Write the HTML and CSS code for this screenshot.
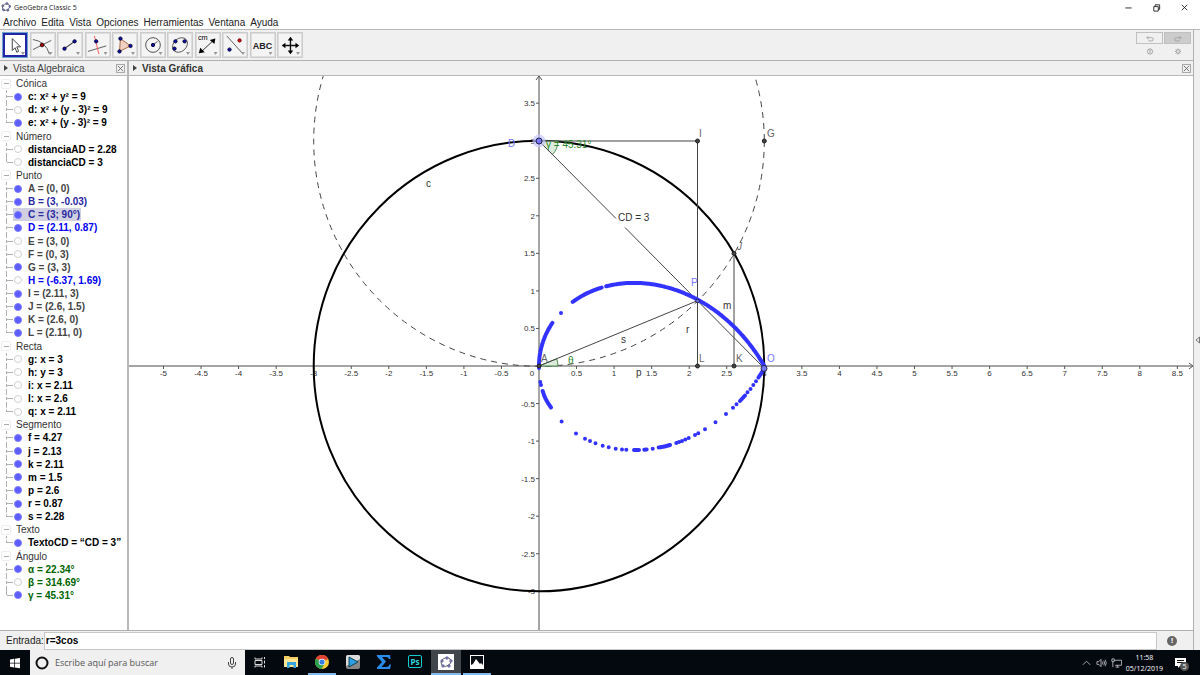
FILE: index.html
```html
<!DOCTYPE html>
<html lang="es">
<head>
  <meta charset="UTF-8" />
  <meta name="viewport" content="width=device-width, initial-scale=1.0" />
  <title>GeoGebra Classic 5</title>
  <link rel="stylesheet" href="styles.css">
</head>
<body>
  <header class="titlebar">
    <svg class="logo" viewBox="0 0 16 16"><ellipse cx="8" cy="8" rx="6" ry="5" transform="rotate(-25 8 8)" fill="none" stroke="#666" stroke-width="1.4"/><g fill="#8484d8" stroke="#446"><circle cx="3" cy="6" r="1.6"/><circle cx="9.500" cy="2.500" r="1.6"/><circle cx="14" cy="7" r="1.6"/><circle cx="11" cy="13" r="1.6"/><circle cx="4" cy="12.500" r="1.6"/></g></svg>
    <span>GeoGebra Classic 5</span>
    <div class="window-buttons">
      <button aria-label="Minimizar"><svg viewBox="0 0 10 10"><path d="M1.500 5.500h7"/></svg></button>
      <button aria-label="Restaurar"><svg viewBox="0 0 10 10"><path d="M2 4h5v5H2zM3.500 4V2h5v5H7"/></svg></button>
      <button aria-label="Cerrar"><svg viewBox="0 0 10 10"><path d="M2 2l6 6M8 2l-6 6"/></svg></button>
    </div>
  </header>

  <nav class="menu">
    <button>Archivo</button>
    <button>Edita</button>
    <button>Vista</button>
    <button>Opciones</button>
    <button>Herramientas</button>
    <button>Ventana</button>
    <button>Ayuda</button>
  </nav>

  <div class="window">
    <main class="app">
      <div class="toolbar">
        <div class="tools">
          <button class="active" aria-label="Elige y Mueve"><svg viewBox="0 0 24 24"><path d="M9 5v13l3-3 2 5 2-1-2-5h4z" fill="#fff" stroke="#333"/></svg></button>
          <button aria-label="Intersección"><svg viewBox="0 0 24 24"><path d="M1 6q14 2 18 16M1 17L21 7" fill="none" stroke="#555"/><circle cx="11" cy="12" r="2" fill="#a00" stroke="#300"/></svg></button>
          <button aria-label="Segmento"><svg viewBox="0 0 24 24"><path d="M6 16L17 8" stroke="#333" stroke-width="1.2"/><circle cx="6" cy="16" r="1.800" class="pt"/><circle cx="17" cy="8" r="1.800" class="pt"/></svg></button>
          <button aria-label="Perpendicular"><svg viewBox="0 0 24 24"><path d="M1 19L21 13" stroke="#555"/><path d="M8 2l5 20" stroke="#f55"/><circle cx="10" cy="8" r="1.800" class="pt"/></svg></button>
          <button aria-label="Polígono"><svg viewBox="0 0 24 24"><path d="M7 5L18 13 6 19z" fill="#f0d0c0" stroke="#a0603c"/><circle cx="7" cy="5" r="1.800" class="pt"/><circle cx="18" cy="13" r="1.800" class="pt"/><circle cx="6" cy="19" r="1.800" class="pt"/></svg></button>
          <button aria-label="Circunferencia"><svg viewBox="0 0 24 24"><circle cx="12" cy="12" r="8" fill="none" stroke="#444"/><path d="M12 12l5-4" stroke="#444"/><circle cx="12" cy="12" r="1.800" class="pt"/></svg></button>
          <button aria-label="Cónica"><svg viewBox="0 0 24 24"><ellipse cx="12" cy="12" rx="9" ry="7" transform="rotate(-42 12 12)" fill="none" stroke="#555"/><circle cx="7" cy="8" r="1.800" class="pt"/><circle cx="17" cy="8" r="1.800" class="pt"/><circle cx="6" cy="16" r="1.800" class="pt"/></svg></button>
          <button aria-label="Distancia"><svg viewBox="0 0 24 24"><text x="1" y="7" font-size="8">cm</text><path d="M4 20L19 6" stroke="#222"/><path d="M2 21l1.500-6 5 5zM20 5l-6 1.500 5 4.500z"/></svg></button>
          <button aria-label="Simetría"><svg viewBox="0 0 24 24"><path d="M3 2l17 19" stroke="#555"/><circle cx="17" cy="7" r="1.800" fill="#d11" stroke="#600"/><circle cx="6" cy="17" r="1.800" class="pt"/></svg></button>
          <button aria-label="Texto"><span>ABC</span></button>
          <button aria-label="Desplaza Vista Gráfica"><svg viewBox="0 0 24 24"><path d="M12.500 6v13M6 12.500h13" stroke="#111" stroke-width="1.500"/><path d="M12.500 3l3 4h-6zM12.500 22l3-4h-6zM3 12.500l4-3v6zM22 12.500l-4-3v6z"/></svg></button>
        </div>
        <div class="history">
          <button aria-label="Deshace"><svg viewBox="0 0 10 8"><path d="M3 1L1 3l2 2M1.500 3H7q2 0 2 2t-2 2H3"/></svg></button>
          <button class="redo" aria-label="Rehace"><svg viewBox="0 0 10 8"><path d="M7 1l2 2-2 2M8.500 3H3Q1 3 1 5t2 2h4"/></svg></button>
          <button class="plain" aria-label="Ayuda"><svg viewBox="0 0 8 8"><circle cx="4" cy="4" r="3"/><path d="M4 3v3M3 3q1-2 2 0"/></svg></button>
          <button class="plain" aria-label="Preferencias"><svg viewBox="0 0 8 8"><circle cx="4" cy="4" r="2"/><path d="M4 0.500v1.500M4 6v1.500M0.500 4h1.500M6 4h1.500M1.500 1.500l1 1M5.500 5.500l1 1M6.500 1.500l-1 1M2.500 5.500l-1 1"/></svg></button>
        </div>
      </div>

      <div class="views">
        <aside class="algebra">
          <div class="view-head">
            <svg class="arrow" viewBox="0 0 4 6"><path d="M0 0l4 3-4 3z"/></svg>
            <span>Vista Algebraica</span>
            <button class="close" aria-label="Cerrar vista"><svg viewBox="0 0 8 8"><path d="M1 1l6 6M7 1L1 7"/></svg></button>
          </div>
          <ul class="tree">
            <li class="group"><i></i>Cónica</li>
            <li><label><input type="checkbox" checked>c: x² + y² = 9</label></li>
            <li><label><input type="checkbox">d: x² + (y - 3)² = 9</label></li>
            <li class="last"><label><input type="checkbox" checked>e: x² + (y - 3)² = 9</label></li>
            <li class="group"><i></i>Número</li>
            <li><label><input type="checkbox">distanciaAD = 2.28</label></li>
            <li class="last"><label><input type="checkbox">distanciaCD = 3</label></li>
            <li class="group"><i></i>Punto</li>
            <li class="gray"><label><input type="checkbox" checked>A = (0, 0)</label></li>
            <li class="navy"><label><input type="checkbox" checked>B = (3, -0.03)</label></li>
            <li class="navy selected"><label><input type="checkbox" checked>C = (3; 90°)</label></li>
            <li class="blue"><label><input type="checkbox" checked>D = (2.11, 0.87)</label></li>
            <li class="gray"><label><input type="checkbox">E = (3, 0)</label></li>
            <li class="gray"><label><input type="checkbox">F = (0, 3)</label></li>
            <li class="gray"><label><input type="checkbox" checked>G = (3, 3)</label></li>
            <li class="blue"><label><input type="checkbox">H = (-6.37, 1.69)</label></li>
            <li class="gray"><label><input type="checkbox" checked>I = (2.11, 3)</label></li>
            <li class="gray"><label><input type="checkbox" checked>J = (2.6, 1.5)</label></li>
            <li class="gray"><label><input type="checkbox" checked>K = (2.6, 0)</label></li>
            <li class="gray last"><label><input type="checkbox" checked>L = (2.11, 0)</label></li>
            <li class="group"><i></i>Recta</li>
            <li><label><input type="checkbox">g: x = 3</label></li>
            <li><label><input type="checkbox">h: y = 3</label></li>
            <li><label><input type="checkbox">i: x = 2.11</label></li>
            <li><label><input type="checkbox">l: x = 2.6</label></li>
            <li class="last"><label><input type="checkbox">q: x = 2.11</label></li>
            <li class="group"><i></i>Segmento</li>
            <li><label><input type="checkbox" checked>f = 4.27</label></li>
            <li><label><input type="checkbox" checked>j = 2.13</label></li>
            <li><label><input type="checkbox" checked>k = 2.11</label></li>
            <li><label><input type="checkbox" checked>m = 1.5</label></li>
            <li><label><input type="checkbox" checked>p = 2.6</label></li>
            <li><label><input type="checkbox" checked>r = 0.87</label></li>
            <li class="last"><label><input type="checkbox" checked>s = 2.28</label></li>
            <li class="group"><i></i>Texto</li>
            <li class="last"><label><input type="checkbox" checked>TextoCD = “CD = 3”</label></li>
            <li class="group"><i></i>Ángulo</li>
            <li class="green"><label><input type="checkbox" checked>α = 22.34°</label></li>
            <li class="green"><label><input type="checkbox">β = 314.69°</label></li>
            <li class="green last"><label><input type="checkbox" checked>γ = 45.31°</label></li>
          </ul>
        </aside>

        <section class="graphics">
          <div class="view-head">
            <svg class="arrow" viewBox="0 0 4 6"><path d="M0 0l4 3-4 3z"/></svg>
            <strong>Vista Gráfica</strong>
            <button class="close" aria-label="Cerrar vista"><svg viewBox="0 0 8 8"><path d="M1 1l6 6M7 1L1 7"/></svg></button>
          </div>
          <div class="canvas">
            <svg id="plot" viewBox="129 76 1064 554">
              <path class="axis" d="M129 366H1192M539 77V630"/>
              <path class="arrowhead" d="M1189 363l4 3-4 3M536 80l3-4 3 4"/>
              <g id="ticks"></g>

              <circle class="dashed" cx="539" cy="141" r="225.300"/>
              <circle class="circle" cx="539" cy="366" r="225.300"/>

              <path class="angle" d="M539 141h19a19 19 0 0 1-5.600 13.500z"/>
              <path class="angle" d="M539 366h19a19 19 0 0 0-1.400-7.200z"/>
              <path class="segment" d="M539 141H697.500V366M734 253.500V366M539 366L697.500 300.700"/>
              <path class="segment" d="M539 141L616 218.500M625 227.500L764 368"/>

              <path id="trace" class="trace"/>
              <path class="trace" d="M561 313h0M540.300 382h0M541 385h0M542.700 391q2 8 8.300 16.500M561.600 421.500h0M576 433.500h0M585 438.700h0M590 441h0M595.500 443.300h0M602.700 445.700h0M608.700 447.300h0M615.700 448.700h0M622 449.500h0M626.300 449.700h0M634 450h5M644.300 449.700l2.400-.3M652.700 448.700h0M658.700 447.500q6-.8 11.300-2.500M676.300 443h0M679 442h0M682 441h0M685.300 439.500h0M688.700 438h0M695 435h0M698.300 433.300h0M705 429.300h0M715.500 422.300h0M726 414h0M733 407.700h0M736.500 404.300h0M740 401L745 395.500M747.500 392.300h0M750.500 389h0M753.300 385h0M756 381.300h0M758.500 377.500L764 369"/>

              <circle class="halo" cx="539" cy="141" r="6.500"/>
              <g class="fixed">
                <circle cx="539" cy="366" r="2"/>
                <circle cx="697.500" cy="141" r="2"/>
                <circle cx="764.300" cy="141" r="2"/>
                <circle cx="734" cy="253.500" r="2"/>
                <circle cx="697.500" cy="366" r="2"/>
                <circle cx="734" cy="366" r="2"/>
              </g>
              <g class="free">
                <circle cx="539" cy="141" r="3"/>
                <circle cx="764" cy="368.500" r="3"/>
                <circle cx="697.500" cy="301" r="1.800"/>
              </g>

              <g class="labels">
                <text x="426" y="187">c</text>
                <text x="618" y="221">CD = 3</text>
                <text x="621" y="343">s</text>
                <text x="686" y="333">r</text>
                <text x="723" y="309">m</text>
                <text x="636" y="376">p</text>
                <g class="point-labels">
                  <text x="699" y="137">I</text>
                  <text x="767" y="137">G</text>
                  <text x="737" y="250" font-style="italic">J</text>
                  <text x="736" y="362">K</text>
                  <text x="699" y="362">L</text>
                  <text x="541" y="362">A</text>
                </g>
                <g class="blue-labels">
                  <text x="508" y="147">D</text>
                  <text x="691" y="286">P</text>
                  <text x="767" y="362">O</text>
                </g>
                <g class="green-labels">
                  <text x="546" y="148">γ = 45.31°</text>
                  <text x="568" y="364">θ</text>
                </g>
              </g>
            </svg>
          </div>
        </section>
      </div>

      <form class="entry">
        <label for="entrada">Entrada:</label>
        <input type="text" id="entrada" value="r=3cos" />
        <button type="button" aria-label="Ayuda de entrada">!</button>
      </form>
    </main>

    <button class="side-strip" aria-label="Apariencias"><svg viewBox="0 0 5 8"><path d="M4.500 1v6L1 4z"/></svg></button>
  </div>

  <footer class="taskbar">
    <button class="start" aria-label="Inicio"><svg viewBox="0 0 12 12"><path d="M1 2.500l4-.7v4H1zM5.700 1.700L11 1v4.800H5.700zM1 6.500h4v4l-4-.7zM5.700 6.500H11v4.800l-5.300-.8z" fill="#fff"/></svg></button>
    <label class="search">
      <svg viewBox="0 0 14 14"><circle cx="7" cy="7" r="5.500" fill="none" stroke="#111" stroke-width="2"/></svg>
      <input type="text" placeholder="Escribe aquí para buscar" />
      <svg class="mic" viewBox="0 0 10 14"><rect x="3.500" y="1.500" width="3" height="7" rx="1.500"/><path d="M1.500 6v2q0 3 3.500 3t3.500-3V6M5 11v2"/></svg>
    </label>
    <div class="apps">
      <button aria-label="Vista de tareas"><svg viewBox="0 0 16 16" fill="none" stroke="#ddd"><path d="M3 3.500V5h7V3.500M3 6.500h7v4H3zM3 13.500V12h7v1.500M12.500 3v2M12.500 6.500v3M12.500 11v2.500"/></svg></button>
      <button aria-label="Explorador"><svg viewBox="0 0 16 16"><path d="M1 2h5l1 1h8v10H1z" fill="#f5cf62"/><path d="M1 5h14v8H1z" fill="#ffe595"/><path d="M4 8h9v6h-2.500v-3h-4v3H4z" fill="#35a4df"/></svg></button>
      <button class="open" aria-label="Chrome"><svg viewBox="0 0 16 16"><circle cx="8" cy="8" r="7" fill="#fc3"/><path d="M8 8L2 4.400A7 7 0 0 1 14.200 5z" fill="#e24335"/><path d="M8 8L2 4.400A7 7 0 0 0 7.500 15l3-5z" fill="#2da04e"/><circle cx="8" cy="8" r="3.300" fill="#fff"/><circle cx="8" cy="8" r="2.600" fill="#3a7de0"/></svg></button>
      <button aria-label="Reproductor"><svg viewBox="0 0 16 16"><rect x="1" y="1" width="14" height="14" rx="2" fill="#888"/><path d="M1 3q0-2 2-2h10q2 0 2 2v2L1 12z" fill="#ddd"/><path d="M4 3l9 5-9 5z" fill="#2c9fe0" stroke="#145"/></svg></button>
      <button aria-label="Sumatorio"><svg viewBox="0 0 16 16"><path d="M1 1h13l.5 4H13q-.5-2-3-2H6l4 4.500L5.500 13H10q3 0 3.500-2.500H15L14 15H1v-1.500L6 8 1 2.500z" fill="#2a8cea"/></svg></button>
      <button aria-label="Photoshop"><span class="ps">Ps</span></button>
      <button class="open current" aria-label="GeoGebra"><svg viewBox="0 0 16 16"><path d="M0 0h16v16H0z" fill="#fff"/><ellipse cx="8" cy="8" rx="5" ry="4" transform="rotate(-25 8 8)" fill="none" stroke="#555"/><g fill="#88d" stroke="#446" stroke-width=".5"><circle cx="4" cy="7" r="1.300"/><circle cx="9" cy="4" r="1.300"/><circle cx="13" cy="7" r="1.300"/><circle cx="11" cy="12" r="1.300"/><circle cx="5" cy="12" r="1.300"/></g></svg></button>
      <button class="open" aria-label="Fotos"><svg viewBox="0 0 16 16"><path d="M1 1h14v14H1z" fill="#fff"/><path d="M2 2h12v9l-2-2-1 1-4-5-3 5-2 1z" fill="#0a0d14"/></svg></button>
    </div>
    <div class="tray">
      <svg viewBox="0 0 12 12"><path d="M2 8l4-4 4 4"/></svg>
      <svg viewBox="0 0 12 12"><path d="M1 4.500h2l2.500-2.500v8L3 7.500H1zM7 4.500q1 1.500 0 3M8.500 3.500q1.800 2.500 0 5M10 2.500q2.400 3.500 0 7" /></svg>
      <svg viewBox="0 0 12 12"><path d="M3.500 3h8v5.500h-7M7 8.500v2M5 10.500h4M1 1.500h2.500v3H1zM2 4.500v6"/></svg>
      <time>11:58<br>05/12/2019</time>
      <button class="notes" aria-label="Notificaciones">
        <svg viewBox="0 0 14 14"><path d="M1 2h11v8H6l-2 2v-2H1z" fill="#fff"/><path d="M3 4.500h7M3 6.500h7" stroke="#111"/></svg>
        <span>5</span>
      </button>
    </div>
  </footer>

  <script>
    const svgNS = 'http://www.w3.org/2000/svg';
    const unit = 75.1;
    const ox = 539;
    const oy = 366;
    const ticks = document.getElementById('ticks');

    function addTick(d, label, x, y, anchor) {
      const line = document.createElementNS(svgNS, 'path');
      line.setAttribute('d', d);
      ticks.appendChild(line);
      const text = document.createElementNS(svgNS, 'text');
      text.setAttribute('x', x);
      text.setAttribute('y', y);
      text.setAttribute('text-anchor', anchor);
      text.textContent = label;
      ticks.appendChild(text);
    }

    for (let v = -5; v <= 8.5; v += 0.5) {
      const x = ox + v * unit;
      addTick(`M${x} 366v3`, v, v === 0 ? x - 7 : x, 376, 'middle');
    }
    for (let v = -3; v <= 3.5; v += 0.5) {
      if (v === 0) continue;
      const y = oy - v * unit;
      addTick(`M539 ${y}h-3`, v, 535, y + 3, 'end');
    }

    // D lies 3 units from C on the line towards B, C runs round the circle
    function traceArc(from, to) {
      let d = '';
      for (let t = from; t <= to; t += 0.5) {
        const a = t * Math.PI / 180;
        const x = ox + unit * 3 * (Math.cos(a) + Math.sin(a / 2));
        const y = oy - unit * 3 * (Math.sin(a) - Math.cos(a / 2));
        d += `${d ? 'L' : 'M'}${x.toFixed(1)} ${y.toFixed(1)}`;
      }
      return d;
    }

    document.getElementById('trace').setAttribute('d',
      traceArc(60, 126.5) + traceArc(128.5, 143) + traceArc(157, 181));
  </script>
</body>
</html>
```
FILE: styles.css
```css
* { box-sizing: border-box; }
body { margin: 0; min-height: 100vh; display: flex; flex-direction: column; font-family: "Liberation Sans", Arial, sans-serif; font-size: 10px; color: #222; background: #fff; }
button { border: 0; padding: 0; margin: 0; background: none; font: inherit; color: inherit; }
input { font: inherit; margin: 0; }
svg { display: block; }

.titlebar { display: flex; align-items: center; height: 14px; padding-left: 1px; gap: 3px; font-family: "Open Sans", sans-serif; font-size: 7px; }
.logo { width: 10px; height: 10px; }
.window-buttons { display: flex; margin-left: auto; gap: 19px; padding-right: 11px; }
.window-buttons svg { width: 9px; height: 9px; fill: none; stroke: #222; }
.menu { display: flex; gap: 5px; height: 15px; padding: 1px 0 0 3px; }

.window { flex: 1; display: flex; border-top: 1px solid #b8b8b8; background: #f0f0f0; }
.app { flex: 1; min-width: 0; display: flex; flex-direction: column; border-right: 1px solid #b0b0b0; }
.side-strip { width: 6px; }
.side-strip svg { width: 5px; height: 8px; fill: none; stroke: #777; margin-left: 1px; }

.toolbar { display: flex; justify-content: space-between; height: 31px; padding: 2px 2px 0; border-bottom: 1px solid #b0b0b0; }
.tools { display: flex; justify-content: space-between; width: 301px; }
.tools button { position: relative; width: 26px; height: 26px; border: 1px solid #ccc; outline: 1px solid #ddd; outline-offset: -2px; background: #f4f4f4; }
.tools button.active { border: 1px solid #6aa5cc; outline: 2px solid #2424a8; outline-offset: -3px; background: #fff; }
.tools button::after { content: ""; position: absolute; right: 2px; bottom: 2px; width: 4px; height: 3px; background: #999; clip-path: polygon(0 0, 100% 0, 50% 100%); }
.tools svg { width: 24px; height: 24px; padding: 1px; }
.tools span { font-size: 9px; font-weight: bold; }
.pt { fill: #11a; stroke: #003; }
.history { display: grid; grid-template-columns: 27px 27px; grid-template-rows: 12px 14px; gap: 0 1px; }
.history button { display: flex; align-items: center; justify-content: center; border: 1px solid #c0c0c0; }
.history .redo { background: #ccc; }
.history .plain { border: 0; }
.history svg { width: 8px; height: 7px; fill: none; stroke: #999; }

.views { flex: 1; display: flex; background: #fff; }
.algebra { width: 129px; border-right: 2px solid #b8b8b8; }
.graphics { flex: 1; min-width: 0; display: flex; flex-direction: column; }
.view-head { display: flex; align-items: center; gap: 5px; height: 15px; padding: 0 2px 0 4px; background: #f0f0f0; border-bottom: 1px solid #b8b8b8; color: #444; }
.view-head strong { color: #333; }
.arrow { width: 4px; height: 6px; fill: #444; }
.close { margin-left: auto; width: 9px; height: 9px; border: 1px solid #aaa; }
.close svg { width: 7px; height: 7px; stroke: #666; }

.tree { display: grid; grid-auto-rows: 1fr; height: 526px; margin: 0; padding: 1px 0 0; list-style: none; font-weight: bold; line-height: 13px; color: #000; white-space: nowrap; }
.tree li { position: relative; display: flex; align-items: center; padding-left: 13px; }
.tree li::before { content: ""; position: absolute; left: 6px; top: 0; height: 100%; border-left: 1px dashed #b0b0b0; }
.tree li.last::before { height: 50%; }
.tree li::after { content: ""; position: absolute; left: 7px; top: 6px; width: 6px; border-top: 1px dashed #b0b0b0; }
.tree li.group::before, .tree li.group::after { content: none; }
.tree .group { padding-left: 1px; gap: 5px; font-weight: normal; color: #333; }
.tree i { display: grid; place-items: center; width: 10px; height: 10px; border: 1px solid #eee; border-radius: 2px; }
.tree i::before { content: ""; width: 5px; height: 1px; background: #aaa; }
.tree label { display: flex; align-items: center; gap: 6px; padding: 0 1px; }
.tree input { appearance: none; width: 8px; height: 8px; border: 1px solid #d0d0d0; border-radius: 50%; background: #fff; }
.tree input:checked { border-color: #7c7cff; background: #5c5cff; }
.tree .selected label { background: #d0d0e2; }
.gray { color: #444; }
.navy { color: #2828a0; }
.blue { color: #00e; }
.green { color: #006400; }

.canvas { flex: 1; min-height: 0; }
#plot { width: 100%; height: 100%; }
.axis { stroke: #888; stroke-width: 1.5; }
.arrowhead { fill: none; stroke: #555; }
#ticks path { stroke: #555; }
#ticks text { font-size: 8px; fill: #333; }
.circle { fill: none; stroke: #000; stroke-width: 2; }
.dashed { fill: none; stroke: #444; stroke-dasharray: 6 5; }
.segment { fill: none; stroke: #444; }
.angle { fill: #dcebdc; stroke: #4a8a4a; }
.trace { fill: none; stroke: #33f; stroke-width: 4; stroke-linecap: round; stroke-linejoin: round; }
.halo { fill: #c4c4ff; fill-opacity: .7; }
.fixed { fill: #444; stroke: #222; }
.free { fill: #7878ff; stroke: #224; }
.labels { fill: #333; }
.point-labels { fill: #666; }
.blue-labels { fill: #77f; }
.green-labels { fill: #2a8a2a; }

.entry { display: flex; align-items: center; height: 20px; border-top: 1px solid #b0b0b0; padding-left: 6px; }
.entry input { flex: 1; height: 18px; padding: 0 1px; border: 1px solid #c8c8c8; background: #fff; font-weight: bold; color: #000; }
.entry button { width: 10px; height: 10px; margin: 0 16px 0 10px; border-radius: 50%; background: #666; color: #fff; font-size: 8px; font-weight: bold; line-height: 10px; }

.taskbar { display: flex; height: 25px; background: #04080f; color: #fff; font-family: "Open Sans", sans-serif; }
.start { width: 30px; }
.start svg { width: 12px; height: 12px; margin: auto; }
.search { display: flex; align-items: center; width: 215px; padding: 0 8px 0 5px; background: #f0f0f0; }
.search svg { width: 14px; height: 14px; }
.search input { flex: 1; min-width: 0; border: 0; padding: 0 6px; background: none; font-size: 9px; }
.search input::placeholder { color: #555; }
.search .mic { width: 10px; height: 14px; fill: none; stroke: #444; }
.apps { display: flex; gap: 1px; }
.apps button { display: flex; align-items: center; justify-content: center; width: 30px; border-bottom: 2px solid transparent; }
.apps svg { width: 16px; height: 16px; }
.apps .open { border-image: linear-gradient(to right, transparent 3px, #83b9e8 3px calc(100% - 3px), transparent 0) 2; }
.apps .current { background: #41454c; border-image: none; border-bottom-color: #83b9e8; }
.ps { width: 14px; height: 13px; border: 1px solid #1cc; border-radius: 2px; color: #3dd; font-size: 8px; font-weight: bold; line-height: 11px; text-align: center; }
.tray { display: flex; align-items: center; gap: 4px; margin-left: auto; padding-right: 12px; }
.tray > svg { width: 11px; height: 12px; fill: none; stroke: #ddd; stroke-width: .8; }
.tray time { font-size: 7px; line-height: 11px; text-align: center; }
.notes { position: relative; margin-left: 7px; }
.notes svg { width: 14px; height: 14px; }
.notes span { position: absolute; left: 6px; top: 6px; width: 9px; height: 9px; border-radius: 50%; background: #555; font-size: 7px; line-height: 9px; }
```
